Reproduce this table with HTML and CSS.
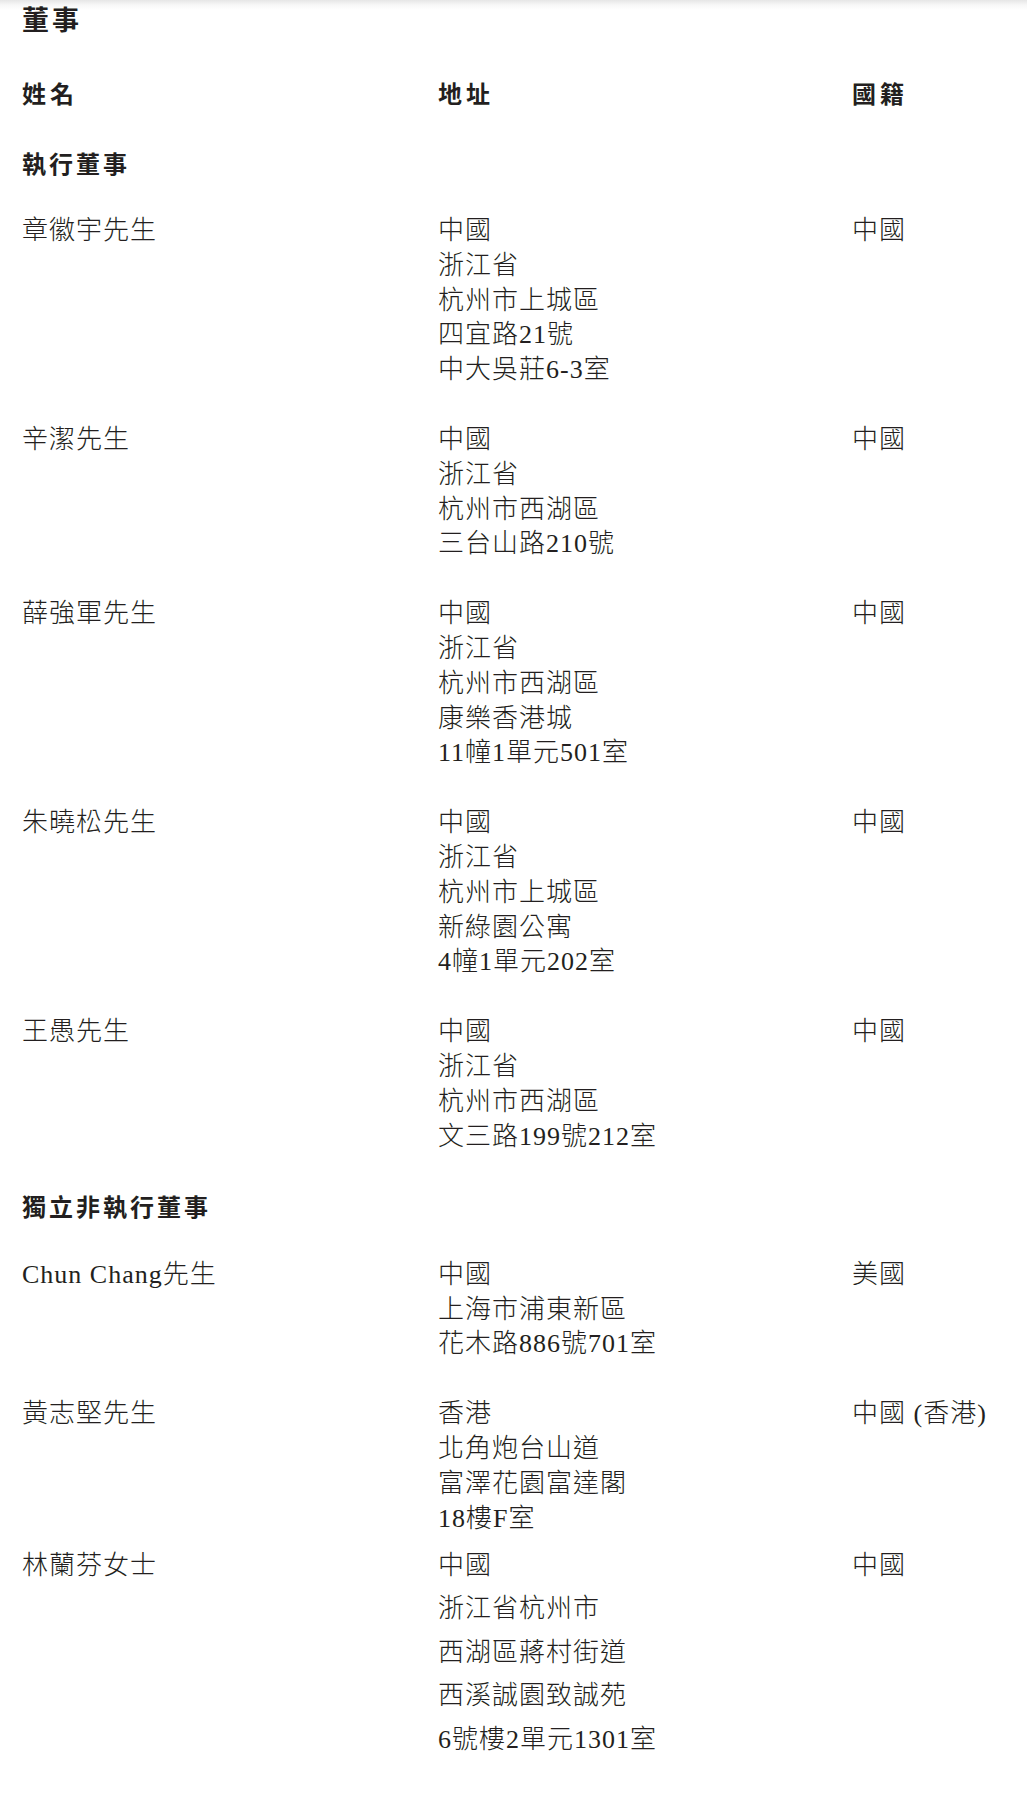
FILE: index.html
```html
<!DOCTYPE html>
<html lang="zh-Hant">
<head>
<meta charset="utf-8">
<title>董事</title>
<link rel="stylesheet" href="styles.css">
</head>
<body>
<div class="page">
  <h1 class="title">董事</h1>

  <div class="row head">
    <div class="cell">姓名</div>
    <div class="cell">地址</div>
    <div class="cell">國籍</div>
  </div>

  <h2 class="section">執行董事</h2>

  <div class="row">
    <div class="cell">章徽宇先生</div>
    <div class="cell">中國<br>浙江省<br>杭州市上城區<br>四宜路21號<br>中大吳莊6-3室</div>
    <div class="cell">中國</div>
  </div>

  <div class="row">
    <div class="cell">辛潔先生</div>
    <div class="cell">中國<br>浙江省<br>杭州市西湖區<br>三台山路210號</div>
    <div class="cell">中國</div>
  </div>

  <div class="row">
    <div class="cell">薛強軍先生</div>
    <div class="cell">中國<br>浙江省<br>杭州市西湖區<br>康樂香港城<br>11幢1單元501室</div>
    <div class="cell">中國</div>
  </div>

  <div class="row">
    <div class="cell">朱曉松先生</div>
    <div class="cell">中國<br>浙江省<br>杭州市上城區<br>新綠園公寓<br>4幢1單元202室</div>
    <div class="cell">中國</div>
  </div>

  <div class="row">
    <div class="cell">王愚先生</div>
    <div class="cell">中國<br>浙江省<br>杭州市西湖區<br>文三路199號212室</div>
    <div class="cell">中國</div>
  </div>

  <h2 class="section">獨立非執行董事</h2>

  <div class="row">
    <div class="cell">Chun Chang先生</div>
    <div class="cell">中國<br>上海市浦東新區<br>花木路886號701室</div>
    <div class="cell">美國</div>
  </div>

  <div class="row tight">
    <div class="cell">黃志堅先生</div>
    <div class="cell">香港<br>北角炮台山道<br>富澤花園富達閣<br>18樓F室</div>
    <div class="cell">中國 (香港)</div>
  </div>

  <div class="row loose">
    <div class="cell">林蘭芬女士</div>
    <div class="cell">中國<br>浙江省杭州市<br>西湖區蔣村街道<br>西溪誠園致誠苑<br>6號樓2單元1301室</div>
    <div class="cell">中國</div>
  </div>
</div>
</body>
</html>
```

FILE: styles.css
```css
html, body {
  margin: 0;
  padding: 0;
}

body {
  background: #ffffff linear-gradient(to bottom, #e6e6e6 0, #f7f7f7 5px, #ffffff 10px) no-repeat;
  color: #231f20;
  font-family: "Liberation Serif", "Noto Sans CJK TC", serif;
}

.page {
  padding: 1px 0 0 22px;
}

.title {
  margin: 0 0 40px;
  font-family: "Noto Sans CJK TC", sans-serif;
  font-weight: 700;
  font-size: 27px;
  line-height: 35px;
  letter-spacing: 3px;
}

.section {
  margin: 0 0 33.5px;
  font-family: "Noto Sans CJK TC", sans-serif;
  font-weight: 700;
  font-size: 24px;
  line-height: 34.8px;
  letter-spacing: 3px;
}

.row {
  display: grid;
  grid-template-columns: 416px 414px 1fr;
  margin-bottom: 35px;
  font-size: 26px;
  line-height: 34.8px;
  letter-spacing: 1px;
  font-weight: 300;
}

.row.head {
  font-family: "Noto Sans CJK TC", sans-serif;
  font-weight: 700;
  font-size: 24px;
  letter-spacing: 4px;
}

.row.tight {
  margin-bottom: 7.3px;
}

.row.loose {
  line-height: 43.6px;
}

.cell {
  white-space: nowrap;
}
```
